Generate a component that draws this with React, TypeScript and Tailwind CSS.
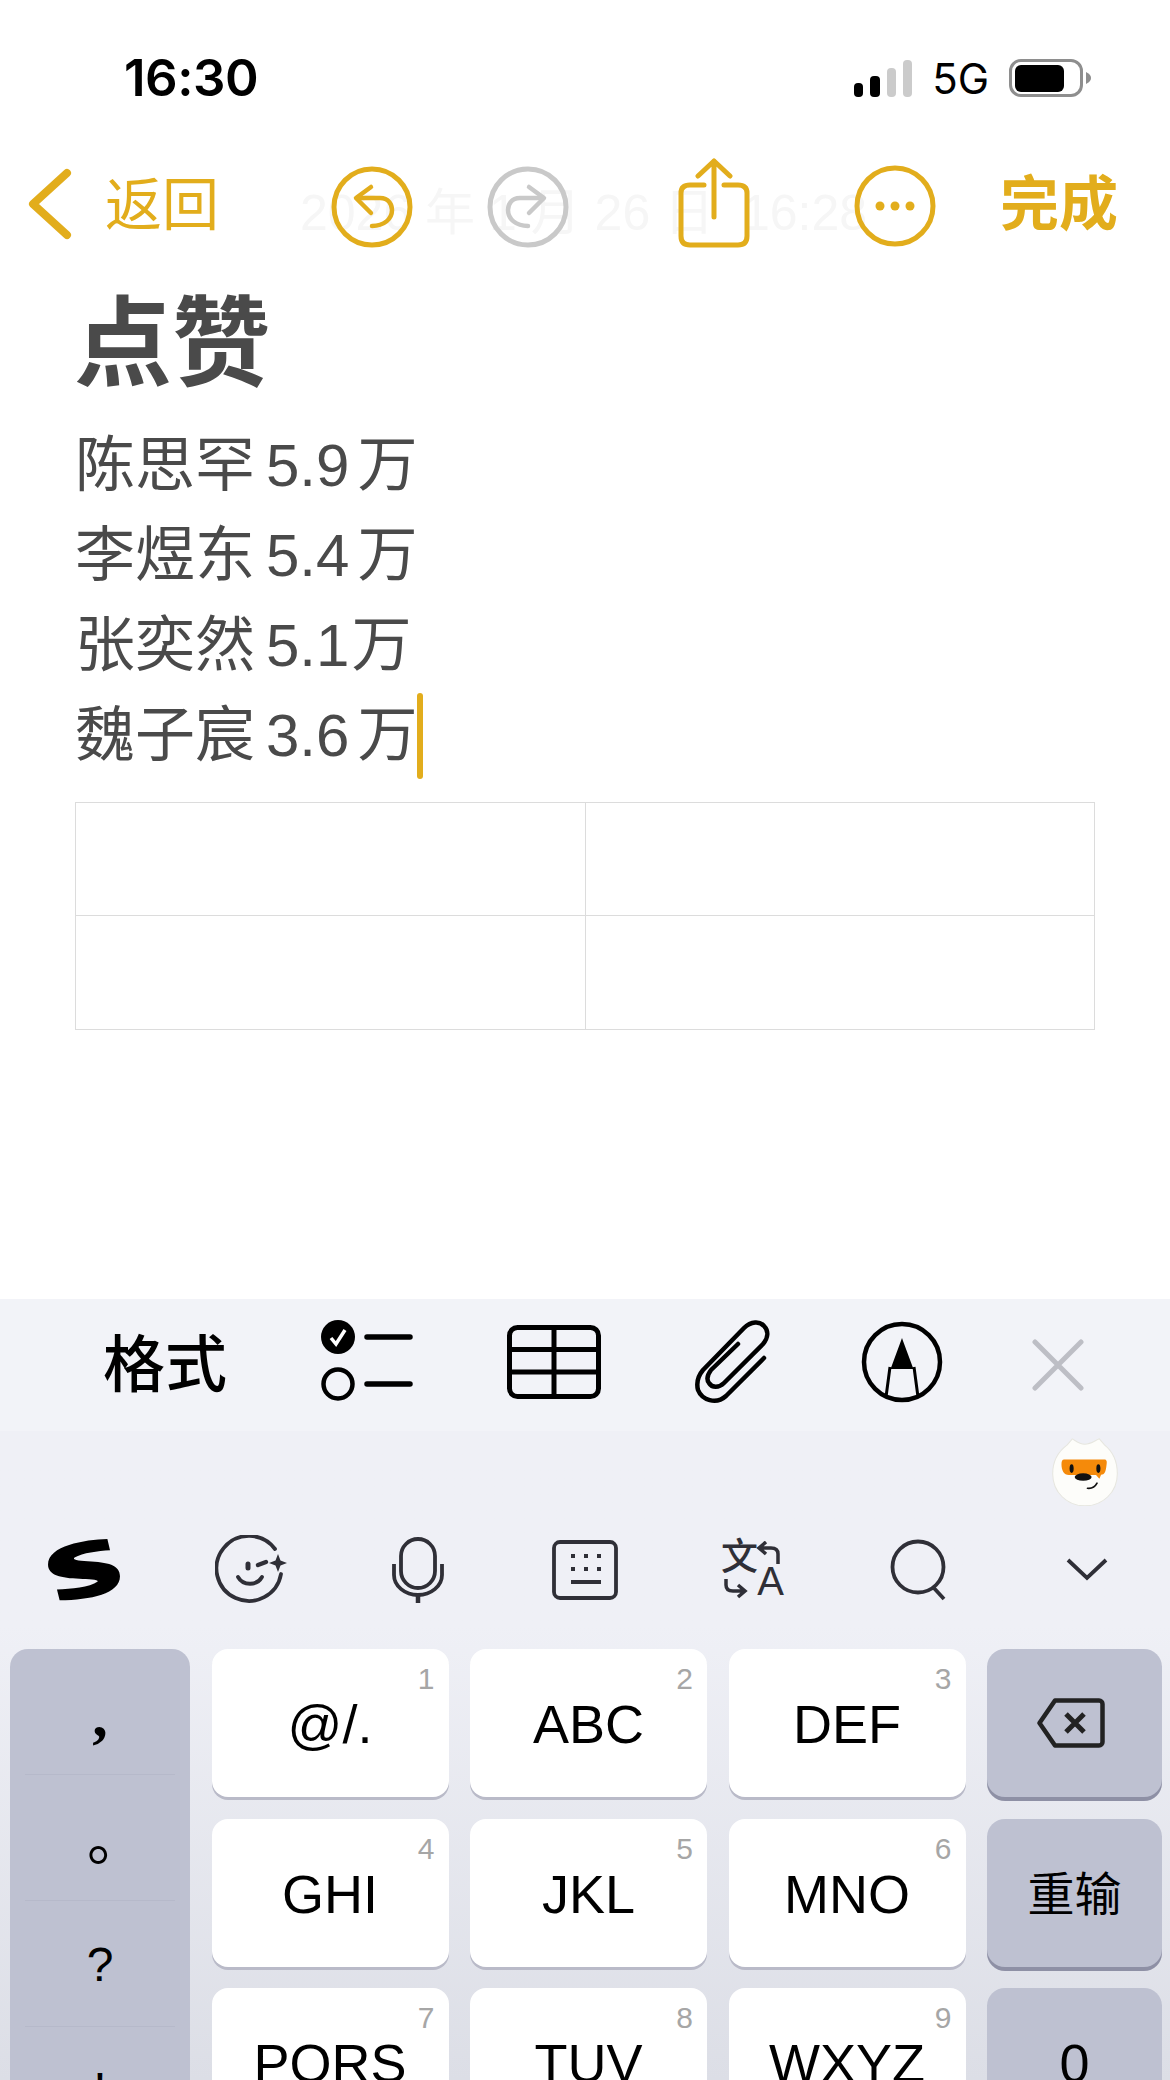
import React from 'react';

const GOLD = '#e2ad1c';
const DARK = '#2f2f37';

function Signal() {
  return (
    <div className="flex items-end gap-[7px]">
      <div className="h-[14px] w-[9px] rounded-[4px] bg-black" />
      <div className="h-[21px] w-[10px] rounded-[4px] bg-black" />
      <div className="h-[29px] w-[9px] rounded-[4px] bg-[#cbcbcb]" />
      <div className="h-[37px] w-[9px] rounded-[4px] bg-[#cbcbcb]" />
    </div>
  );
}

function Battery() {
  return (
    <div className="flex items-center">
      <div className="flex h-[38px] w-[74px] items-center rounded-[12px] border-[3px] border-[#8e8e8e] pl-[3px]">
        <div className="h-[27px] w-[49px] rounded-[6px] bg-black" />
      </div>
      <svg width="8" height="12" viewBox="0 0 8 12" className="ml-[3px]">
        <path d="M0 0 C4 2 5 4 5 6 C5 8 4 10 0 12 Z" fill="#8e8e8e" />
      </svg>
    </div>
  );
}

function RoundArrow({ color, flip }: { color: string; flip?: boolean }) {
  return (
    <svg width="84" height="84" viewBox="0 0 84 84" fill="none" stroke={color} strokeWidth="5" strokeLinecap="round" strokeLinejoin="round" className={flip ? '-scale-x-100' : ''}>
      <circle cx="42" cy="42" r="38" />
      <path d="M41 22 L26 33 L41 48" strokeWidth="4.5" />
      <path d="M27 33 H50 C59 33 62 40 62 45 C62 54 54 61 42 61" strokeWidth="4.5" />
    </svg>
  );
}

function ChecklistIcon() {
  return (
    <svg width="92" height="84" viewBox="0 0 92 84" fill="none">
      <circle cx="17" cy="17" r="17" fill="#000" />
      <path d="M10 18 L15 24 L24 10" stroke="#fff" strokeWidth="3.5" />
      <circle cx="17" cy="64" r="14.5" stroke="#000" strokeWidth="4.5" />
      <path d="M46 17 H89 M46 64 H89" stroke="#000" strokeWidth="5.5" strokeLinecap="round" />
    </svg>
  );
}

function TableIcon() {
  return (
    <svg width="94" height="74" viewBox="0 0 94 74" fill="none" stroke="#000" strokeWidth="5">
      <rect x="2.5" y="2.5" width="89" height="69" rx="8" />
      <path d="M2 24.5 H92 M2 47 H92 M47 2 V72" />
    </svg>
  );
}

function ClipIcon() {
  return (
    <svg width="76" height="84" viewBox="0 0 76 84" fill="none" stroke="#000" strokeWidth="4.5" strokeLinecap="round" strokeLinejoin="round">
      <path d="M70 38 L32 76 C22 85 8 80 4 70 C2 62 4 56 9 50 L50 8 C57 1 66 1 70 6 C75 11 74 18 69 24 L30 63 C25 68 18 68 15 63 C12 59 14 54 17 50 L44 24" />
    </svg>
  );
}

function MarkupIcon() {
  return (
    <svg width="82" height="82" viewBox="0 0 82 82" fill="none" stroke="#000" strokeWidth="4.5">
      <circle cx="41" cy="41" r="38" />
      <path d="M41 20 L51 47 H31 Z" fill="#000" strokeWidth="2" />
      <path d="M29 46 L25 76 M53 46 L57 76" strokeWidth="3" />
    </svg>
  );
}

function SwiftLogo() {
  return (
    <svg width="72" height="62" viewBox="0 0 217 187" fill="#000">
      <path d="M179 0 L187 34 C150 36 105 42 80 56 C72 63 90 66 120 67 C180 70 217 78 217 112 C217 165 130 183 35 185 L27 152 C70 150 125 146 150 128 C152 122 120 122 95 120 C40 118 0 110 0 77 C0 20 110 2 179 0 Z" />
    </svg>
  );
}

function SmileIcon() {
  return (
    <svg width="74" height="70" viewBox="0 0 74 70" fill="none" stroke={DARK} strokeWidth="3.8" strokeLinecap="round">
      <path d="M60 14 A32.5 32.5 0 1 0 66 39" />
      <path d="M33 29 V33" strokeWidth="5" />
      <path d="M43 30 L51 27" strokeWidth="4.5" />
      <path d="M23 42 C28 51 42 51 47 42" />
      <path d="M63 19 L65.5 25.5 L72 28 L65.5 30.5 L63 37 L60.5 30.5 L54 28 L60.5 25.5 Z" fill={DARK} stroke="none" />
    </svg>
  );
}

function MicIcon() {
  return (
    <svg width="52" height="66" viewBox="0 0 52 66" fill="none" stroke={DARK} strokeWidth="3.8">
      <rect x="9" y="2" width="34" height="49" rx="17" />
      <path d="M2 27 V38 C2 49 13 58 26 58 C39 58 50 49 50 38 V27" />
      <path d="M26 58 V66" strokeWidth="4.5" />
    </svg>
  );
}

function KeyboardIcon() {
  return (
    <svg width="66" height="60" viewBox="0 0 66 60" fill="none" stroke={DARK}>
      <rect x="2" y="2" width="62" height="56" rx="6" strokeWidth="3.8" />
      <path d="M19 16 h4 M32 16 h4 M45 16 h4 M19 29 h4 M32 29 h4 M45 29 h4" strokeWidth="4" />
      <path d="M19 42 H49" strokeWidth="4" />
    </svg>
  );
}

function TranslateIcon() {
  return (
    <div className="relative h-[58px] w-[62px] text-[#2f2f37]">
      <span className="absolute left-[-2px] top-[-5px] text-[37px] font-medium leading-[44px]">文</span>
      <span className="absolute bottom-[-5px] right-[1px] text-[40px] leading-[46px]">A</span>
      <svg width="62" height="58" viewBox="0 0 62 58" fill="none" stroke={DARK} strokeWidth="3.5" className="absolute left-0 top-0">
        <path d="M55 23 V13 C55 8 52 7 48 7 H38 M43 1 L36 7 L43 13" />
        <path d="M3 38 V44 C3 49 6 50 10 50 H20 M15 44 L22 50 L15 56" />
      </svg>
    </div>
  );
}

function SearchIcon() {
  return (
    <svg width="56" height="62" viewBox="0 0 56 62" fill="none" stroke={DARK} strokeWidth="3.8">
      <circle cx="28" cy="28" r="25.5" />
      <path d="M43 48 L54 60" />
    </svg>
  );
}

function Mascot() {
  return (
    <svg width="66" height="68" viewBox="0 0 195 200">
      <path d="M2 105 C2 70 18 40 45 20 L60 2 C70 8 80 18 97 18 C115 18 125 8 140 2 L155 20 C180 40 193 70 193 105 C193 160 150 200 97 200 C45 200 2 160 2 105 Z" fill="#fdfdfa" stroke="#e6e6df" strokeWidth="3" />
      <path d="M36 63 H155 C162 63 163 70 161 80 C159 100 155 108 145 108 L140 120 L130 109 H50 C35 109 28 95 28 78 C28 68 30 63 36 63 Z" fill="#f58a0a" />
      <ellipse cx="58" cy="90" rx="6" ry="13" fill="#111" />
      <ellipse cx="137" cy="90" rx="6" ry="13" fill="#111" />
      <ellipse cx="92" cy="115" rx="25" ry="11" fill="#111" />
      <path d="M105 148 Q124 150 133 133" fill="none" stroke="#111" strokeWidth="5" strokeLinecap="round" />
    </svg>
  );
}

function BackspaceIcon() {
  return (
    <svg width="68" height="50" viewBox="0 0 68 50" fill="none" stroke="#222" strokeWidth="4.5" strokeLinejoin="round">
      <path d="M18 2.5 H62 C64 2.5 65.5 4 65.5 6 V44 C65.5 46 64 47.5 62 47.5 H18 L2.5 25 Z" />
      <path d="M29 16 L47 34 M47 16 L29 34" strokeWidth="5" />
    </svg>
  );
}

function NumKey({ label, num }: { label: string; num: string }) {
  return (
    <div className="relative flex h-[148px] items-center justify-center rounded-[16px] bg-white pt-[3px] text-[54px] text-black shadow-[0_3px_0_#b9bac8]">
      <span className="absolute right-[14px] top-[12px] text-[30px] leading-[36px] text-[#a6a6a6]">{num}</span>
      {label}
    </div>
  );
}

function SideKey({ children }: { children: React.ReactNode }) {
  return (
    <div className="flex h-[148px] items-center justify-center rounded-[18px] bg-[#bec1d1] text-black shadow-[0_4px_0_#8e90a5]">
      {children}
    </div>
  );
}

const NOTE_LINES = [
  ['陈思罕', '5.9', '万'],
  ['李煜东', '5.4', '万'],
  ['张奕然', '5.1', '万'],
];

export default function App() {
  return (
    <div className="relative flex h-[2080px] w-[1170px] flex-col overflow-hidden bg-white font-['Liberation_Sans','Noto_Sans_CJK_SC',sans-serif]">
      {/* status bar */}
      <div className="flex h-[156px] items-center justify-between pl-[124px] pr-[76px]">
        <span className="font-['Inter'] text-[51px] font-semibold tracking-[-0.5px] text-black">16:30</span>
        <div className="flex items-center">
          <Signal />
          <span className="mx-[20px] font-['Inter'] text-[42px] text-black">5G</span>
          <Battery />
        </div>
      </div>

      {/* nav */}
      <div className="relative flex h-[99px] items-center text-[#e2ad1c]">
        <span className="absolute left-[300px] top-[20px] whitespace-nowrap text-[50px] text-[#f6f6f6]">2026 年 1 月 26 日&nbsp;&nbsp;16:28</span>
        <svg width="46" height="72" viewBox="0 0 46 72" fill="none" stroke={GOLD} strokeWidth="8" strokeLinecap="round" strokeLinejoin="round" className="relative mb-[3px] ml-[27px]">
          <path d="M40 5 L6 36 L40 67" />
        </svg>
        <span className="relative ml-[32px] text-[57px] font-normal">返回</span>
        <div className="relative ml-[111px] mt-[3px]"><RoundArrow color={GOLD} /></div>
        <div className="relative ml-[72px] mt-[3px]"><RoundArrow color="#c9c9c9" flip /></div>
        <svg width="72" height="90" viewBox="0 0 72 90" fill="none" stroke={GOLD} strokeWidth="5" strokeLinecap="round" strokeLinejoin="round" className="relative mb-[5px] ml-[108px]">
          <path d="M26 27 H12 C6 27 3 30 3 35 V78 C3 84 6 87 12 87 H60 C66 87 69 84 69 78 V35 C69 30 66 27 60 27 H46" />
          <path d="M36 59 V3 M20 18 L36 3 L52 18" />
        </svg>
        <svg width="82" height="82" viewBox="0 0 82 82" fill="none" stroke={GOLD} strokeWidth="5" className="relative ml-[104px]">
          <circle cx="41" cy="41" r="38" />
          <circle cx="26" cy="41" r="4.5" fill={GOLD} stroke="none" />
          <circle cx="41" cy="41" r="4.5" fill={GOLD} stroke="none" />
          <circle cx="56" cy="41" r="4.5" fill={GOLD} stroke="none" />
        </svg>
        <span className="relative ml-[64px] text-[59px] font-bold">完成</span>
      </div>

      {/* note body */}
      <div className="pl-[75px] text-[#4a4a4a]">
        <h1 className="mb-[1px] ml-[-1px] h-[165px] pt-[29px] text-[98px] font-bold leading-[120px]">点赞</h1>
        {NOTE_LINES.map(([name, value, unit]) => (
          <div key={name} className="h-[90px] whitespace-nowrap text-[60px] leading-[90px]">
            {name}<span className="ml-[11px]">{value}</span><span className={value === '5.1' ? 'ml-[2px]' : 'ml-[8px]'}>{unit}</span>
          </div>
        ))}
        <div className="relative h-[90px] whitespace-nowrap text-[60px] leading-[90px]">
          魏子宸<span className="ml-[11px]">3.6</span><span className="ml-[8px]">万</span>
          <span className="absolute left-[342px] top-[2px] h-[86px] w-[6px] rounded-full bg-[#e2ad1c]" />
        </div>
      </div>

      <div className="mx-[75px] mt-[21px] grid h-[228px] grid-cols-[510px_1fr] grid-rows-2 border border-[#dcdcdc]">
        <div className="border-b border-r border-[#dcdcdc]" />
        <div className="border-b border-[#dcdcdc]" />
        <div className="border-r border-[#dcdcdc]" />
        <div />
      </div>

      <div className="flex-1" />

      {/* format toolbar */}
      <div className="flex h-[132px] items-center bg-[#f2f3f8] pb-[6px] text-black">
        <span className="ml-[103px] mt-[6px] w-[124px] text-[62px] font-medium">格式</span>
        <div className="ml-[94px]"><ChecklistIcon /></div>
        <div className="ml-[94px]"><TableIcon /></div>
        <div className="ml-[93px]"><ClipIcon /></div>
        <div className="ml-[91px]"><MarkupIcon /></div>
        <svg width="52" height="52" viewBox="0 0 52 52" fill="none" stroke="#bdbec5" strokeWidth="5" strokeLinecap="round" className="ml-[89px] mt-[6px]">
          <path d="M3 3 L49 49 M49 3 L3 49" />
        </svg>
      </div>

      {/* keyboard */}
      <div className="h-[649px] bg-gradient-to-b from-[#eff0f6] from-[30%] to-[#dcdee6]">
        <div className="flex h-[101px] items-start justify-end pr-[52px] pt-[7px]">
          <Mascot />
        </div>
        <div className="flex h-[76px] items-center">
          <div className="ml-[48px]"><SwiftLogo /></div>
          <div className="ml-[95px]"><SmileIcon /></div>
          <div className="ml-[103px]"><MicIcon /></div>
          <div className="ml-[108px]"><KeyboardIcon /></div>
          <div className="ml-[105px]"><TranslateIcon /></div>
          <div className="ml-[105px]"><SearchIcon /></div>
          <svg width="44" height="26" viewBox="0 0 44 26" fill="none" stroke={DARK} strokeWidth="3.8" className="ml-[119px]">
            <path d="M3 3 L22 21 L41 3" />
          </svg>
        </div>
        <div className="mt-[41px] grid grid-cols-[180px_237px_237px_237px_175px] grid-rows-[148px_148px_148px] gap-[21.5px] pl-[10px]">
          <div className="row-span-3 flex h-[504px] flex-col rounded-[18px] bg-[#bec1d1] px-[15px] text-black">
            <div className="flex h-[126px] items-center justify-center border-b border-[#b6b9ca] pt-[8px] font-['Liberation_Serif'] text-[62px] font-bold">,</div>
            <div className="flex h-[126px] items-center justify-center border-b border-[#b6b9ca] pl-[32px] pt-[4px] text-[58px] leading-none">。</div>
            <div className="flex h-[126px] items-center justify-center border-b border-[#b6b9ca] pt-[3px] text-[48px]">?</div>
            <div className="flex h-[126px] items-center justify-center text-[48px]">!</div>
          </div>
          <NumKey label="@/." num="1" />
          <NumKey label="ABC" num="2" />
          <NumKey label="DEF" num="3" />
          <SideKey><div className="pr-[8px]"><BackspaceIcon /></div></SideKey>
          <NumKey label="GHI" num="4" />
          <NumKey label="JKL" num="5" />
          <NumKey label="MNO" num="6" />
          <SideKey><span className="pt-[6px] text-[47px]">重输</span></SideKey>
          <NumKey label="PQRS" num="7" />
          <NumKey label="TUV" num="8" />
          <NumKey label="WXYZ" num="9" />
          <SideKey><span className="pt-[3px] text-[54px]">0</span></SideKey>
        </div>
      </div>
    </div>
  );
}
